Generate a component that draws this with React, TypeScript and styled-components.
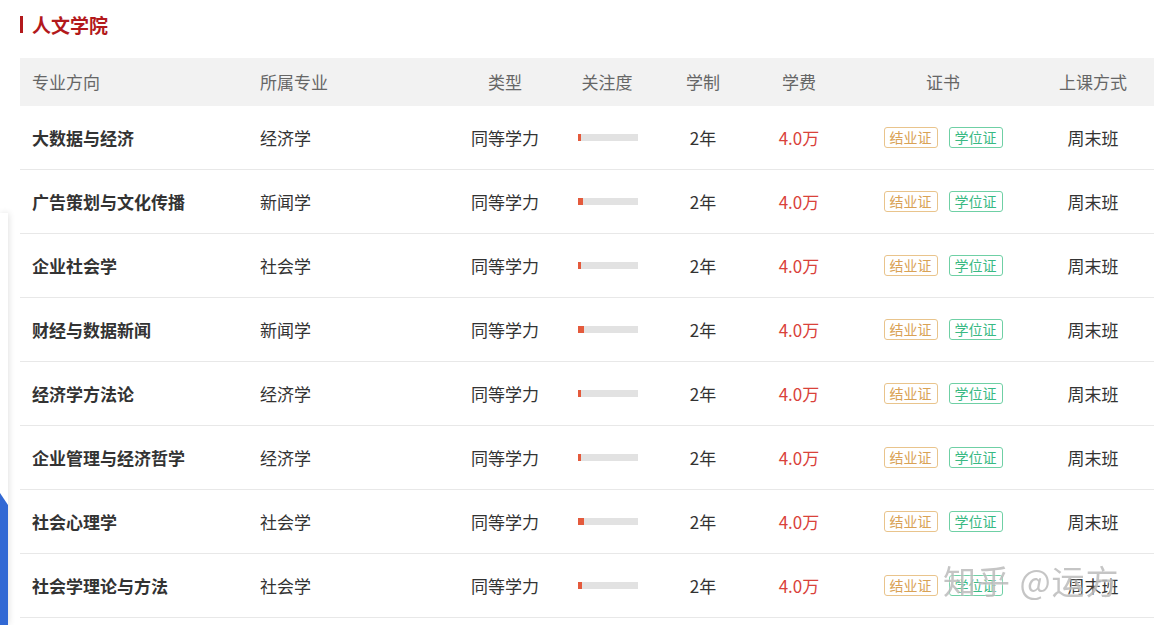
import styled, { createGlobalStyle } from 'styled-components';

const GlobalStyle = createGlobalStyle`
  body {
    margin: 0;
    background: #fff;
    font-family: "Microsoft YaHei", "Noto Sans CJK SC", "Noto Sans", sans-serif;
    overflow: hidden;
  }
`

const Page = styled.div`
  padding: 12px 0 0 20px;
  width: 1160px;
`

const Title = styled.h2`
  display: flex;
  align-items: center;
  gap: 9px;
  margin: 0 0 22px;
  height: 24px;
  font-size: 19px;
  font-weight: 700;
  color: #b3191c;

  &::before {
    content: '';
    width: 3px;
    height: 17px;
    background: #b3191c;
  }
`

const Row = styled.div<{ $head?: boolean }>`
  display: grid;
  grid-template-columns: 228px 207px 100px 104px 88px 104px 184px 116px;
  padding-right: 20px;
  align-items: center;
  height: ${p => (p.$head ? '48px' : '63px')};
  background: ${p => (p.$head ? '#f2f2f2' : '#fff')};
  border-bottom: ${p => (p.$head ? 'none' : '1px solid #e8e8e8')};
  color: ${p => (p.$head ? '#666' : '#333')};
  font-size: 17px;
  line-height: 24px;
`

const Cell = styled.div<{ $left?: boolean; $bold?: boolean; $red?: boolean }>`
  display: flex;
  justify-content: ${p => (p.$left ? 'flex-start' : 'center')};
  padding-left: ${p => (p.$left ? '12px' : '0')};
  font-weight: ${p => (p.$bold ? 700 : 400)};
  color: ${p => (p.$red ? '#d9423a' : 'inherit')};
  white-space: nowrap;
`

const Bar = styled.div`
  width: 60px;
  height: 7px;
  margin-left: 2px;
  background: #e2e2e2;
`

const Fill = styled.div`
  height: 100%;
  background: #e45a3c;
`

const Badges = styled.div`
  display: flex;
  gap: 11px;
`

const Badge = styled.span<{ $tone: 'orange' | 'green' }>`
  padding: 0 5px;
  height: 19px;
  line-height: 19px;
  font-size: 14px;
  border-radius: 3px;
  border: 1px solid ${p => (p.$tone === 'orange' ? '#e9c48c' : '#6fd0a5')};
  color: ${p => (p.$tone === 'orange' ? '#d9a255' : '#39b983')};
`

const SidePanel = styled.div`
  position: fixed;
  left: 0;
  top: 213px;
  bottom: 0;
  width: 8px;
  background: #fff;
  box-shadow: 1px 0 6px rgba(0, 0, 0, 0.12);
  overflow: hidden;

  &::after {
    content: '';
    position: absolute;
    left: 0;
    right: 0;
    top: 280px;
    bottom: 0;
    background: #3168d4;
    clip-path: polygon(0 0, 100% 12px, 100% 100%, 0 100%);
  }
`

const Watermark = styled.div`
  position: fixed;
  left: 943px;
  top: 556px;
  font-size: 33px;
  letter-spacing: 1px;
  color: rgba(150, 150, 150, 0.55);
  text-shadow: 0 0 2px rgba(255, 255, 255, 0.9);
  pointer-events: none;
`

const rows = [
  { name: '大数据与经济', major: '经济学', heat: 3 },
  { name: '广告策划与文化传播', major: '新闻学', heat: 5 },
  { name: '企业社会学', major: '社会学', heat: 3 },
  { name: '财经与数据新闻', major: '新闻学', heat: 6 },
  { name: '经济学方法论', major: '经济学', heat: 3 },
  { name: '企业管理与经济哲学', major: '经济学', heat: 3 },
  { name: '社会心理学', major: '社会学', heat: 6 },
  { name: '社会学理论与方法', major: '社会学', heat: 4 },
]

export default function App() {
  return (
    <Page>
      <GlobalStyle />
      <Title>人文学院</Title>
      <Row $head>
        <Cell $left>专业方向</Cell>
        <Cell $left>所属专业</Cell>
        <Cell>类型</Cell>
        <Cell>关注度</Cell>
        <Cell>学制</Cell>
        <Cell>学费</Cell>
        <Cell>证书</Cell>
        <Cell>上课方式</Cell>
      </Row>
      {rows.map(r => (
        <Row key={r.name}>
          <Cell $left $bold>{r.name}</Cell>
          <Cell $left>{r.major}</Cell>
          <Cell>同等学力</Cell>
          <Cell>
            <Bar>
              <Fill style={{ width: r.heat }} />
            </Bar>
          </Cell>
          <Cell>2年</Cell>
          <Cell $red>4.0万</Cell>
          <Cell>
            <Badges>
              <Badge $tone="orange">结业证</Badge>
              <Badge $tone="green">学位证</Badge>
            </Badges>
          </Cell>
          <Cell>周末班</Cell>
        </Row>
      ))}
      <SidePanel />
      <Watermark>知乎 @运方</Watermark>
    </Page>
  )
}
